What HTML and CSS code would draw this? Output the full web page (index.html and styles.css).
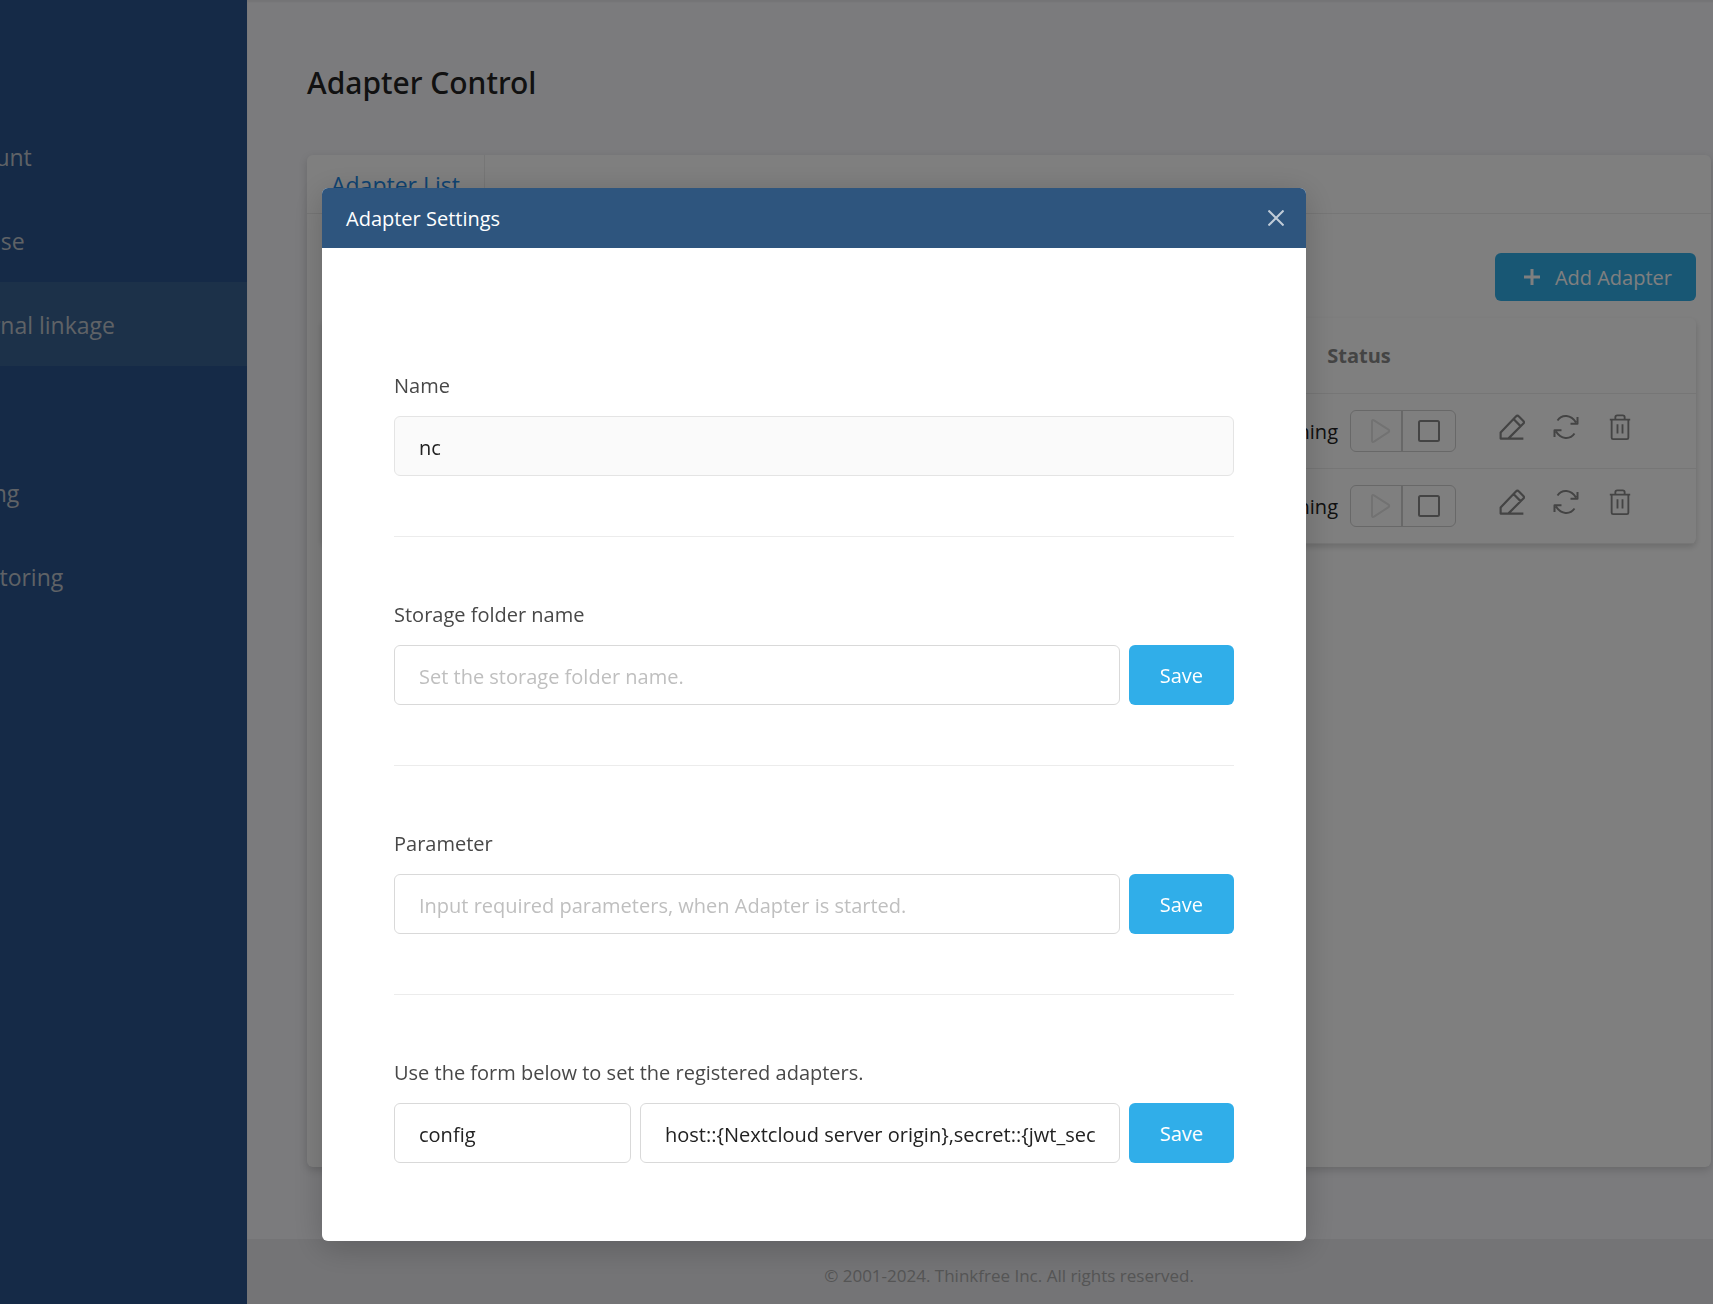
FILE: index.html
```html
<!DOCTYPE html>
<html lang="en">
<head>
    <meta charset="UTF-8">
    <meta name="viewport" content="width=device-width, initial-scale=1.0">
    <title>Adapter Control</title>
    <link rel="stylesheet" href="styles.css">
</head>
<body>
    <svg class="sprite" aria-hidden="true">
        <symbol id="icon-play" viewBox="0 0 24 24"><path d="M4 2.500Q4 .2 6 1.400L20.500 10.600Q22 12 20.500 13.200L6 22.600Q4 23.800 4 21.500Z"/></symbol>
        <symbol id="icon-stop" viewBox="0 0 24 24"><rect x="2" y="2" width="20" height="20" rx="1.500"/></symbol>
        <symbol id="icon-edit" viewBox="0 0 24 24"><path d="M22.500 22.700H1.500V17L15.600 2.300Q17 .8 18.400 2.300L22.500 6.400Q23.600 7.600 22.500 8.800L8.800 22.500M13.400 4.600L19.900 11.200"/></symbol>
        <symbol id="icon-refresh" viewBox="0 0 26 24"><path d="M4.500 5.500C9 -1 18 -.5 23 7.500M24.500 2V8.700H17.500M21.500 18.500C17 25 8 24.500 3 16.500M1.500 22V15.300H8.500"/></symbol>
        <symbol id="icon-trash" viewBox="0 0 24 28"><path d="M1 6H23M3 6V25.500Q3 27 4.500 27H19.500Q21 27 21 25.500V6M7 6V3.500Q7 1.500 9 1.500H15Q17 1.500 17 3.500V6M9.300 11V21M14.700 11V21"/></symbol>
    </svg>

    <div class="page">
        <nav class="sidebar">
            <a class="sidebar__link" href="#">Account</a>
            <a class="sidebar__link" href="#">License</a>
            <a class="sidebar__link sidebar__link--active" href="#">External linkage</a>
            <a class="sidebar__link sidebar__link--spaced" href="#">Setting</a>
            <a class="sidebar__link" href="#">Monitoring</a>
        </nav>
        <div class="content">
            <main class="main">
                <h1 class="main__title">Adapter Control</h1>
                <section class="card">
                    <div class="tabs">
                        <a class="tabs__item" href="#">Adapter List</a>
                    </div>
                    <div class="card__body">
                        <button class="button button--add"><svg class="button__plus" viewBox="0 0 16 16"><path d="M8 0V16M0 8H16"/></svg>Add Adapter</button>
                        <table class="table">
                            <thead>
                                <tr>
                                    <th></th>
                                    <th class="table__status">Status</th>
                                    <th class="table__actions"></th>
                                </tr>
                            </thead>
                            <tbody>
                                <tr>
                                    <td></td>
                                    <td>
                                        <div class="status">
                                            <span>Running</span>
                                            <div class="status__group">
                                                <button class="status__button" aria-label="Start" disabled><svg><use href="#icon-play"/></svg></button>
                                                <button class="status__button" aria-label="Stop"><svg><use href="#icon-stop"/></svg></button>
                                            </div>
                                        </div>
                                    </td>
                                    <td>
                                        <div class="actions">
                                            <button class="actions__button" aria-label="Edit"><svg><use href="#icon-edit"/></svg></button>
                                            <button class="actions__button" aria-label="Restart"><svg><use href="#icon-refresh"/></svg></button>
                                            <button class="actions__button" aria-label="Delete"><svg><use href="#icon-trash"/></svg></button>
                                        </div>
                                    </td>
                                </tr>
                                <tr>
                                    <td></td>
                                    <td>
                                        <div class="status">
                                            <span>Running</span>
                                            <div class="status__group">
                                                <button class="status__button" aria-label="Start" disabled><svg><use href="#icon-play"/></svg></button>
                                                <button class="status__button" aria-label="Stop"><svg><use href="#icon-stop"/></svg></button>
                                            </div>
                                        </div>
                                    </td>
                                    <td>
                                        <div class="actions">
                                            <button class="actions__button" aria-label="Edit"><svg><use href="#icon-edit"/></svg></button>
                                            <button class="actions__button" aria-label="Restart"><svg><use href="#icon-refresh"/></svg></button>
                                            <button class="actions__button" aria-label="Delete"><svg><use href="#icon-trash"/></svg></button>
                                        </div>
                                    </td>
                                </tr>
                            </tbody>
                        </table>
                    </div>
                </section>
            </main>
            <footer class="footer">© 2001-2024. Thinkfree Inc. All rights reserved.</footer>
        </div>
    </div>

    <div class="overlay">
        <div class="modal" role="dialog" aria-labelledby="modal-title">
            <div class="modal__header">
                <h2 class="modal__title" id="modal-title">Adapter Settings</h2>
                <button class="modal__close" aria-label="Close"><svg viewBox="0 0 16 16"><path d="M.5 .5L15.500 15.500M15.500 .5L.5 15.500"/></svg></button>
            </div>
            <form class="modal__body">
                <div class="field">
                    <label class="field__label" for="name">Name</label>
                    <div class="field__row">
                        <input class="field__input" id="name" type="text" value="nc" disabled>
                    </div>
                </div>
                <div class="field">
                    <label class="field__label" for="folder">Storage folder name</label>
                    <div class="field__row">
                        <input class="field__input" id="folder" type="text" placeholder="Set the storage folder name.">
                        <button class="button" type="button">Save</button>
                    </div>
                </div>
                <div class="field">
                    <label class="field__label" for="parameter">Parameter</label>
                    <div class="field__row">
                        <input class="field__input" id="parameter" type="text" placeholder="Input required parameters, when Adapter is started.">
                        <button class="button" type="button">Save</button>
                    </div>
                </div>
                <div class="field">
                    <label class="field__label" for="key">Use the form below to set the registered adapters.</label>
                    <div class="field__row">
                        <input class="field__input field__input--key" id="key" type="text" value="config">
                        <input class="field__input" type="text" aria-label="Value" value="host::{Nextcloud server origin},secret::{jwt_secret}">
                        <button class="button" type="button">Save</button>
                    </div>
                </div>
            </form>
        </div>
    </div>
</body>
</html>
```
FILE: styles.css
```css
:root {
    --navy: #2a548e;
    --blue: #30aee9;
    --header: #2e557e;
    --line: #ececec;
    --border: #d9d9d9;
    --radius: 6px;
}

* {
    margin: 0;
    padding: 0;
    box-sizing: border-box;
}

body {
    overflow: hidden;
    background: #f6f6fa;
    color: #222;
    font-family: "Segoe UI", "Open Sans", sans-serif;
    font-size: 20px;
}

button,
input {
    font: inherit;
}

a {
    text-decoration: none;
}

svg {
    display: block;
    fill: none;
    stroke: currentColor;
    stroke-linejoin: round;
}

.sprite {
    display: none;
}

/* wider than the window, both sides run off */
.page {
    display: flex;
    min-height: 100vh;
    margin: 0 -58px 0 -113px;
}

.sidebar {
    flex: none;
    width: 360px;
    padding-top: 114px;
    background: var(--navy);
}

.sidebar__link {
    display: block;
    height: 84px;
    padding-left: 58px;
    color: #bfc5cd;
    font-size: 23px;
    line-height: 86px;
}

.sidebar__link--active {
    background: #386292;
}

.sidebar__link--spaced {
    margin-top: 84px;
}

.content {
    display: flex;
    flex: 1;
    flex-direction: column;
    box-shadow: inset 0 2px 2px rgba(0, 0, 0, 0.06);
}

.main {
    display: flex;
    flex: 1;
    flex-direction: column;
    padding: 60px 60px 72px;
}

.main__title {
    margin-bottom: 49px;
    font-family: "Segoe UI", "Noto Sans", sans-serif;
    font-size: 30px;
    font-weight: 500;
    line-height: 46px;
}

.card {
    flex: 1;
    border-radius: var(--radius);
    background: #fff;
    box-shadow: 0 3px 8px rgba(0, 0, 0, 0.16);
}

.tabs {
    display: flex;
    height: 59px;
    border-bottom: 1px solid var(--line);
}

.tabs__item {
    padding: 0 24px;
    border-right: 1px solid var(--line);
    color: #1e88e5;
    font-size: 23px;
    line-height: 60px;
}

.card__body {
    display: flex;
    flex-direction: column;
    gap: 17px;
    padding: 39px 15px;
}

.button {
    flex: none;
    height: 60px;
    padding: 0 31px;
    border: 0;
    border-radius: var(--radius);
    background: var(--blue);
    color: #fff;
}

.button--add {
    display: flex;
    align-items: center;
    align-self: flex-end;
    gap: 15px;
    height: 48px;
    padding: 0 24px 0 29px;
}

.button__plus {
    width: 16px;
    height: 16px;
    stroke-width: 3;
}

.table {
    width: 100%;
    border-collapse: separate;
    border-spacing: 0;
    border-radius: var(--radius);
    box-shadow: 0 3px 6px rgba(0, 0, 0, 0.16);
    table-layout: fixed;
}

.table th {
    height: 76px;
    border-bottom: 1px solid var(--line);
    color: #888;
}

.table td {
    height: 75px;
    border-bottom: 1px solid var(--line);
}

.table__status {
    width: 222px;
}

.table__actions {
    width: 226px;
}

.status {
    display: flex;
    align-items: center;
    justify-content: flex-end;
    gap: 12px;
    padding-right: 14px;
}

.status__group {
    display: flex;
    border: 1px solid #d0d0d0;
    border-radius: var(--radius);
}

.status__button {
    width: 52px;
    height: 40px;
    border: 0;
    background: none;
    color: #888;
}

.status__button svg {
    width: 24px;
    height: 24px;
    margin: auto;
    stroke-width: 2;
}

.status__button:disabled {
    padding-left: 8px;
    border-right: 2px solid #d0d0d0;
    color: #e4e4e4;
}

.actions {
    display: flex;
    gap: 26px;
    padding: 0 0 8px 28px;
}

.actions__button {
    width: 28px;
    height: 28px;
    border: 0;
    background: none;
    color: #888;
}

.actions__button svg {
    width: 26px;
    height: 26px;
    margin: auto;
    stroke-width: 2;
}

.footer {
    height: 65px;
    background: #e8e8ec;
    color: #aaa;
    font-size: 17px;
    line-height: 73px;
    text-align: center;
}

.overlay {
    position: fixed;
    inset: 0;
    padding: 188px 407px 0 322px;
    background: rgba(0, 0, 0, 0.5);
}

.modal {
    overflow: hidden;
    border-radius: var(--radius);
    background: #fff;
    box-shadow: 0 6px 32px rgba(0, 0, 0, 0.2);
}

.modal__header {
    display: flex;
    align-items: center;
    justify-content: space-between;
    height: 60px;
    padding: 0 22px 0 24px;
    background: var(--header);
}

.modal__title {
    color: #fff;
    font-size: 20px;
    font-weight: 500;
    line-height: 28px;
    padding-top: 2px;
}

.modal__close {
    padding: 0;
    border: 0;
    background: none;
    color: #c0ccd8;
}

.modal__close svg {
    width: 16px;
    height: 16px;
    stroke-width: 2;
}

.modal__body {
    padding: 60px 72px 18px;
}

.field {
    padding: 62px 0 60px;
}

.field + .field {
    border-top: 1px solid var(--line);
}

.field__label {
    display: block;
    margin-bottom: 14px;
    color: #484848;
    line-height: 32px;
}

.field__row {
    display: flex;
    gap: 9px;
}

.field__input {
    flex: 1;
    min-width: 0;
    height: 60px;
    padding: 2px 24px 0;
    border: 1px solid var(--border);
    border-radius: var(--radius);
    background: #fff;
    color: #222;
}

.field__input:disabled {
    border-color: #e4e4e4;
    background: #fafafa;
}

.field__input::placeholder {
    color: #bfbfbf;
}

.field__input--key {
    flex: 0 0 237px;
}
```
